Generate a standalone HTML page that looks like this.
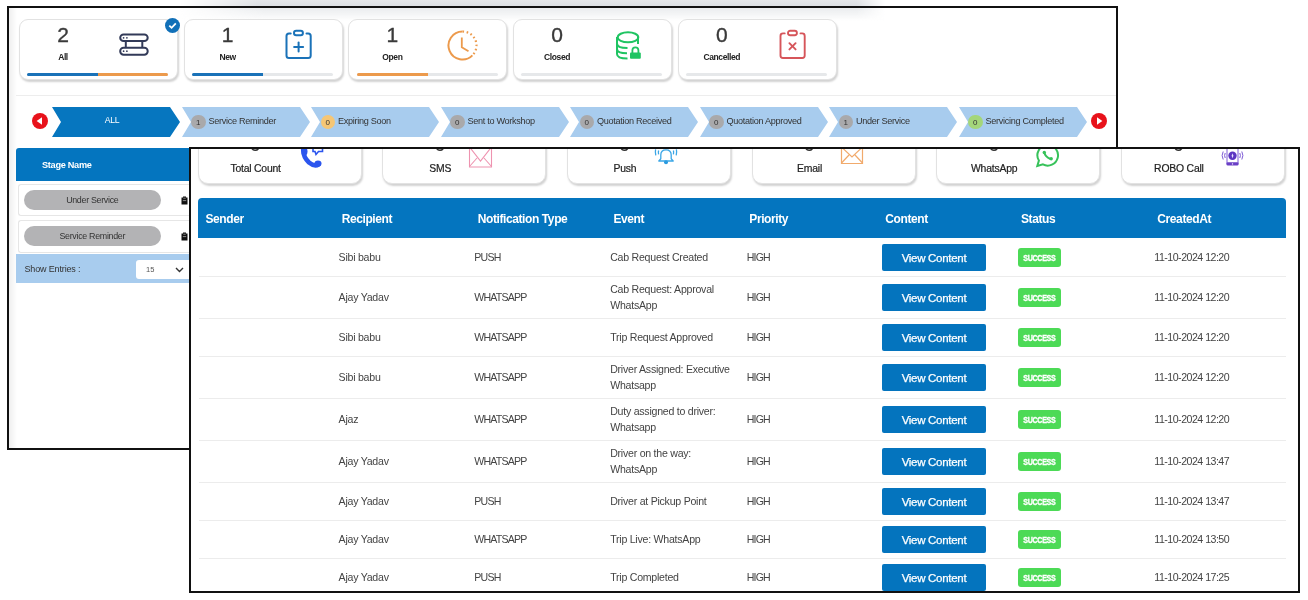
<!DOCTYPE html><html><head><meta charset="utf-8"><style>*{box-sizing:border-box;margin:0;padding:0}
html,body{width:1308px;height:600px;overflow:hidden;background:#fff;font-family:"Liberation Sans",sans-serif;color:#333;position:relative}
.abs{position:absolute}
#blob{position:absolute;left:180px;top:0;width:705px;height:6px;background:linear-gradient(180deg,#e4e6e9,#dcdfe3);-webkit-mask-image:linear-gradient(90deg,transparent 0,#000 11%,#000 96%,transparent 100%)}
#lw{will-change:transform;position:absolute;left:7px;top:6px;width:1111px;height:444px;border:2px solid #111;background:#fff;overflow:hidden}
#lwshade{position:absolute;left:171px;top:0;width:705px;height:13px;background:linear-gradient(180deg,#eaecee,rgba(255,255,255,0));-webkit-mask-image:linear-gradient(90deg,transparent 0,#000 12%,#000 96%,transparent 100%)}
#lwleft{position:absolute;left:0;top:0;width:8px;height:100%;background:linear-gradient(90deg,#efefef,rgba(255,255,255,0))}
.card{position:absolute;top:11px;width:159px;height:61px;border:1px solid #e2e2e2;border-radius:9px;background:#fff;box-shadow:1px 2px 2px rgba(0,0,0,.18)}
.card .num{position:absolute;left:0;width:86px;text-align:center;top:3.2px;font-size:21px;color:#3a3a3a;line-height:24px;-webkit-text-stroke:.35px #3a3a3a}
.card .lbl{position:absolute;left:0;width:86px;text-align:center;top:31.5px;font-size:8.5px;letter-spacing:-.4px;font-weight:bold;color:#222;line-height:10px}
.card .bar{position:absolute;left:7.3px;top:52.6px;width:141px;height:3px;border-radius:2px;background:#e6e8ea;overflow:hidden}
.card .bar i{position:absolute;top:0;height:3px;display:block}
.card svg{position:absolute}
#divl{position:absolute;left:7px;top:87px;width:1100px;height:1px;background:#ededed}
.chev{position:absolute;top:99px;height:30px;width:128px}
.chev svg{position:absolute;left:0;top:0}
.chev .t{position:absolute;top:-0.6px;line-height:30px;font-size:9.1px;letter-spacing:-.3px;color:#333;white-space:nowrap}
.chev .b{position:absolute;top:7.6px;width:14.5px;height:14.5px;border-radius:50%;font-size:8px;line-height:15.5px;text-align:center;color:#333}
#rw{will-change:transform;position:absolute;left:189px;top:147px;width:1111px;height:446px;border:2px solid #111;background:#fff;overflow:hidden}
.rcard{position:absolute;top:-30px;width:164px;height:65px;border:1px solid #e2e2e2;border-radius:10px;background:#fff;box-shadow:1px 2px 2px rgba(0,0,0,.18)}
.rcard .lbl{position:absolute;left:0;width:114px;text-align:center;top:43px;font-size:10.4px;letter-spacing:-.2px;color:#222;line-height:12px;-webkit-text-stroke:.2px #222}
.rcard .rnum{position:absolute;left:0;width:114px;text-align:center;top:11.5px;font-size:20px;color:#333;line-height:24px}
.rcard svg{position:absolute}
#thead{position:absolute;left:6.8px;top:48.8px;width:1088px;height:40px;background:#0475bf;border-radius:4px 4px 0 0}
.th{position:absolute;top:1px;line-height:40px;font-size:12px;letter-spacing:-.4px;font-weight:bold;color:#fff;white-space:nowrap}
.row{position:absolute;left:8px;width:1087px;border-bottom:1px solid #ececec}
.td{position:absolute;font-size:10.6px;letter-spacing:-.25px;color:#444;white-space:nowrap;line-height:16px}
.btn{position:absolute;width:104px;height:27px;background:#0474be;border-radius:2px;color:#fff;-webkit-text-stroke:.25px #fff;font-size:11.5px;letter-spacing:-.3px;line-height:28px;text-align:center}
.ok{position:absolute;width:43px;height:19px;background:#4cda56;border-radius:3px;color:#fff;font-size:9px;font-weight:bold;line-height:19px;text-align:center;letter-spacing:-.4px}
.ok span{display:inline-block;transform:scaleX(.79);-webkit-text-stroke:.35px #fff;position:relative;top:1px}
</style></head><body>
<div id="blob"></div>
<div id="lw"><div id="lwshade"></div><div id="lwleft"></div>
<div class="card" style="left:10.0px"><div class="num">2</div><div class="lbl">All</div><svg style="left:99px;top:13px" width="31" height="24" viewBox="0 0 31 24" fill="none" stroke="#323a58" stroke-width="2">
<rect x="1.2" y="1.5" width="27.5" height="6.6" rx="3.4"/><rect x="1.2" y="14.7" width="27.5" height="7" rx="3.4"/>
<line x1="6.8" y1="8" x2="6.8" y2="14.8"/><line x1="23.3" y1="8" x2="23.3" y2="14.8"/>
<circle cx="4.6" cy="4.8" r=".85" fill="#323a58" stroke="none"/><circle cx="7.9" cy="4.8" r=".85" fill="#323a58" stroke="none"/>
<circle cx="4.6" cy="18.2" r=".85" fill="#323a58" stroke="none"/><circle cx="7.9" cy="18.2" r=".85" fill="#323a58" stroke="none"/></svg><div class="bar"><i style="left:0px;width:71px;background:#1a72b8"></i><i style="left:71px;width:71px;background:#ec9a4c"></i></div></div>
<div class="card" style="left:174.7px"><div class="num">1</div><div class="lbl">New</div><svg style="left:100px;top:9px" width="28" height="31" viewBox="0 0 28 31" fill="none" stroke="#1a72b8" stroke-width="2" stroke-linecap="round">
<path d="M5.7 4.4H4Q1.5 4.4 1.5 6.9V26.5Q1.5 29 4 29H23.2Q25.7 29 25.7 26.5V6.9Q25.7 4.4 23.2 4.4H21.5"/>
<rect x="9" y="1.7" width="8.9" height="4.6" rx="2.2"/>
<line x1="13.6" y1="13.6" x2="13.6" y2="22.6"/><line x1="9.1" y1="18.1" x2="18.1" y2="18.1"/></svg><div class="bar"><i style="left:0px;width:71px;background:#1a72b8"></i></div></div>
<div class="card" style="left:339.4px"><div class="num">1</div><div class="lbl">Open</div><svg style="left:98px;top:10px" width="31" height="31" viewBox="0 0 31 31" fill="none" stroke="#ec9a4c" stroke-width="2">
<path d="M15.5 1.5A14 14 0 1 0 25.4 25.4"/>
<path d="M15.5 1.5A14 14 0 0 1 25.4 25.4" stroke-dasharray="1.6 2.6" stroke-width="2.2"/>
<path d="M14.8 7.5V17.3L21.5 21.3" stroke-width="1.8"/></svg><div class="bar"><i style="left:0px;width:71px;background:#ec9a4c"></i></div></div>
<div class="card" style="left:504.1px"><div class="num">0</div><div class="lbl">Closed</div><svg style="left:102px;top:11px" width="26" height="29" viewBox="0 0 26 29" fill="none" stroke="#1fc462" stroke-width="2">
<ellipse cx="12" cy="6.3" rx="10.3" ry="5"/>
<path d="M1 6V23Q1 27.5 11.5 27.5"/><path d="M22 6V13"/>
<path d="M1 12.5Q1 17 11.5 17"/><path d="M1 18Q1 22.3 11 22.3"/>
<rect x="14" y="21.6" width="10.8" height="6.2" rx="1" fill="#1fc462" stroke="none"/>
<path d="M16.4 22V19.3Q16.4 16.4 19.4 16.4Q22.4 16.4 22.4 19.3V22" stroke-width="1.8"/></svg><div class="bar"></div></div>
<div class="card" style="left:668.8px"><div class="num">0</div><div class="lbl">Cancelled</div><svg style="left:100px;top:9px" width="28" height="31" viewBox="0 0 28 31" fill="none" stroke="#d6555a" stroke-width="1.9" stroke-linecap="round">
<path d="M5.7 4.4H4Q1.5 4.4 1.5 6.9V26.5Q1.5 29 4 29H23.2Q25.7 29 25.7 26.5V6.9Q25.7 4.4 23.2 4.4H21.5"/>
<rect x="9" y="1.7" width="8.9" height="4.6" rx="2.2"/>
<line x1="10.4" y1="14.2" x2="16.6" y2="20.4"/><line x1="16.6" y1="14.2" x2="10.4" y2="20.4"/></svg><div class="bar"></div></div>
<svg class="abs" style="left:155.5px;top:10px" width="15" height="15" viewBox="0 0 15 15"><circle cx="7.5" cy="7.5" r="7.5" fill="#1170b8"/><path d="M4.3 7.6L6.6 9.8L10.8 5.4" fill="none" stroke="#fff" stroke-width="1.8"/></svg>
<div id="divl"></div>
<div class="chev" style="left:43.0px"><svg width="128" height="30"><polygon points="0,0 118,0 128,15 118,30 0,30 9,15" fill="#0676bf"/></svg><div class="t" style="left:0;top:-1.6px;width:120px;text-align:center;color:#fff;font-size:8.7px">ALL</div></div>
<div class="chev" style="left:172.5px"><svg width="128" height="30"><polygon points="0,0 118,0 128,15 118,30 0,30 9,15" fill="#a8ccee"/></svg><div class="b" style="left:9.5px;background:#a9a9ab">1</div><div class="t" style="left:27px">Service Reminder</div></div>
<div class="chev" style="left:302.0px"><svg width="128" height="30"><polygon points="0,0 118,0 128,15 118,30 0,30 9,15" fill="#a8ccee"/></svg><div class="b" style="left:9.5px;background:#f5c675">0</div><div class="t" style="left:27px">Expiring Soon</div></div>
<div class="chev" style="left:431.5px"><svg width="128" height="30"><polygon points="0,0 118,0 128,15 118,30 0,30 9,15" fill="#a8ccee"/></svg><div class="b" style="left:9.5px;background:#a9a9ab">0</div><div class="t" style="left:27px">Sent to Workshop</div></div>
<div class="chev" style="left:561.0px"><svg width="128" height="30"><polygon points="0,0 118,0 128,15 118,30 0,30 9,15" fill="#a8ccee"/></svg><div class="b" style="left:9.5px;background:#a9a9ab">0</div><div class="t" style="left:27px">Quotation Received</div></div>
<div class="chev" style="left:690.5px"><svg width="128" height="30"><polygon points="0,0 118,0 128,15 118,30 0,30 9,15" fill="#a8ccee"/></svg><div class="b" style="left:9.5px;background:#a9a9ab">0</div><div class="t" style="left:27px">Quotation Approved</div></div>
<div class="chev" style="left:820.0px"><svg width="128" height="30"><polygon points="0,0 118,0 128,15 118,30 0,30 9,15" fill="#a8ccee"/></svg><div class="b" style="left:9.5px;background:#a9a9ab">1</div><div class="t" style="left:27px">Under Service</div></div>
<div class="chev" style="left:949.5px"><svg width="128" height="30"><polygon points="0,0 118,0 128,15 118,30 0,30 9,15" fill="#a8ccee"/></svg><div class="b" style="left:9.5px;background:#a4d67a">0</div><div class="t" style="left:27px">Servicing Completed</div></div>
<svg class="abs" style="left:22.5px;top:105px" width="16" height="16" viewBox="0 0 16 16"><circle cx="8" cy="8" r="8" fill="#e8121b"/><path d="M10 4.2V11.8L4.6 8Z" fill="#fff"/></svg>
<svg class="abs" style="left:1081.5px;top:105px" width="16" height="16" viewBox="0 0 16 16"><circle cx="8" cy="8" r="8" fill="#e8121b"/><path d="M6 4.2V11.8L11.4 8Z" fill="#fff"/></svg>
<div class="abs" style="left:7px;top:140px;width:200px;height:32.5px;background:#0475bf;border-radius:3px 0 0 0"></div>
<div class="abs" style="left:33px;top:140.5px;line-height:32.5px;font-size:9.2px;letter-spacing:-.3px;font-weight:bold;color:#fff">Stage Name</div>
<div class="abs" style="left:8.5px;top:175.8px;width:200px;height:32.5px;border:1px solid #e6e6e6;border-right:none;border-radius:3px 0 0 3px"></div>
<div class="abs pill" style="left:14.8px;top:181.5px;width:137px;height:20.5px;border-radius:10px;background:#b3b3b5;font-size:8.9px;letter-spacing:-.3px;line-height:20.5px;text-align:center;color:#333">Under Service</div>
<svg class="abs" style="left:172px;top:187.8px" width="7" height="9" viewBox="0 0 7 9"><path d="M0.5 1.5H2V0.6H5V1.5H6.5V8.5H0.5Z" fill="#111"/><path d="M2.3 2.2H4.7M1.8 4.6H5.2" stroke="#ddd" stroke-width=".6"/></svg>
<div class="abs" style="left:8.5px;top:212px;width:200px;height:32.5px;border:1px solid #e6e6e6;border-right:none;border-radius:3px 0 0 3px"></div>
<div class="abs pill" style="left:14.8px;top:217.7px;width:137px;height:20.5px;border-radius:10px;background:#b3b3b5;font-size:8.9px;letter-spacing:-.3px;line-height:20.5px;text-align:center;color:#333">Service Reminder</div>
<svg class="abs" style="left:172px;top:224.0px" width="7" height="9" viewBox="0 0 7 9"><path d="M0.5 1.5H2V0.6H5V1.5H6.5V8.5H0.5Z" fill="#111"/><path d="M2.3 2.2H4.7M1.8 4.6H5.2" stroke="#ddd" stroke-width=".6"/></svg>
<div class="abs" style="left:7px;top:246px;width:200px;height:28.5px;background:#a8ccee"></div>
<div class="abs" style="left:15.5px;top:246.7px;line-height:28.5px;font-size:9px;letter-spacing:-.15px;color:#333">Show Entries :</div>
<div class="abs" style="left:126.5px;top:252px;width:60px;height:19px;background:#fff;border-radius:3px"></div>
<div class="abs" style="left:137px;top:252px;line-height:19px;font-size:7.5px;color:#555">15</div>
<svg class="abs" style="left:166px;top:259px" width="9" height="6" viewBox="0 0 9 6"><path d="M1 1L4.5 4.5L8 1" fill="none" stroke="#333" stroke-width="1.4"/></svg>
</div>
<div id="rw">
<div class="rcard" style="left:6.6px"><div class="rnum">9</div><div class="lbl">Total Count</div></div>
<div class="rcard" style="left:191.2px"><div class="rnum">9</div><div class="lbl">SMS</div></div>
<div class="rcard" style="left:375.9px"><div class="rnum">9</div><div class="lbl">Push</div></div>
<div class="rcard" style="left:560.6px"><div class="rnum">9</div><div class="lbl">Email</div></div>
<div class="rcard" style="left:745.2px"><div class="rnum">9</div><div class="lbl">WhatsApp</div></div>
<div class="rcard" style="left:929.9px"><div class="rnum">9</div><div class="lbl">ROBO Call</div></div>
<svg class="abs" style="left:-191px;top:-149px" width="1308" height="600" viewBox="0 0 1308 600">
<path d="M303.5 146.5Q302 156 309 162.5Q314.5 167 318.5 164.5" fill="none" stroke="#2b55ee" stroke-width="4.6" stroke-linecap="round"/>
<path d="M313 147V151.5H315L316 154.5L318.5 151.5H322.5V147" fill="none" stroke="#2b55ee" stroke-width="1.6"/><ellipse cx="304.5" cy="151.5" rx="3" ry="4" fill="#2b55ee"/><ellipse cx="318" cy="163.5" rx="3.5" ry="3" fill="#2b55ee"/>
<g fill="none" stroke="#ee93b0" stroke-width="1.1"><path d="M469.5 146V167H491.5V146"/><path d="M469.5 147L480.5 161L491.5 147M469.5 166.5L477 158M491.5 166.5L484 158"/></g>
<g fill="none" stroke="#3aa6e6" stroke-width="1.3" stroke-linejoin="round"><path d="M658.8 161L660.8 158.8V155Q660.8 149.8 666 149.8Q671.2 149.8 671.2 155V158.8L673.2 161Z"/><path d="M655.6 149.3Q655 152.3 655.8 155.3M658.6 150.5Q658.1 152.3 658.6 154.3M676.4 149.3Q677 152.3 676.2 155.3M673.4 150.5Q673.9 152.3 673.4 154.3"/></g>
<circle cx="666" cy="162.3" r="2" fill="#2a9be0"/>
<g fill="none" stroke="#f1aa6c" stroke-width="1.2"><path d="M841.5 146V163.5H862.5V146"/><path d="M841.5 147L852 157L862.5 147M841.5 163L849 155M862.5 163L855 155"/></g>
<path d="M1047.7 145A10.3 10.3 0 0 0 1038.9 160.6L1037.3 166L1042.9 164.4A10.3 10.3 0 1 0 1047.7 145Z" fill="none" stroke="#37c25a" stroke-width="2"/>
<path d="M1044.3 152.3Q1045 156.5 1050.5 159" fill="none" stroke="#37c25a" stroke-width="2" stroke-linecap="round"/><circle cx="1044.3" cy="152.5" r="1.7" fill="#37c25a"/><circle cx="1051.2" cy="158.8" r="1.7" fill="#37c25a"/>
<g stroke="#7d5ad6" fill="none" stroke-width="1"><path d="M1227 146V164M1238 146V164"/>
<path d="M1223.2 151.5Q1221 155.5 1223.2 159.5M1225.2 153Q1224 155.5 1225.2 158M1241.8 151.5Q1244 155.5 1241.8 159.5M1239.8 153Q1241 155.5 1239.8 158"/></g>
<rect x="1226.5" y="162.3" width="12" height="3.3" rx="1.3" fill="#6a3fc6"/><circle cx="1232.5" cy="163.9" r=".7" fill="#fff"/>
<circle cx="1232.5" cy="155.7" r="4.2" fill="#5c36c2"/><path d="M1232.5 153.2L1233.4 155.7L1232.5 158.2L1231.6 155.7Z" fill="#e8e0ff"/>
</svg>
<div id="thead">
<div class="th" style="left:7.6px">Sender</div>
<div class="th" style="left:143.9px">Recipient</div>
<div class="th" style="left:279.9px">Notification Type</div>
<div class="th" style="left:415.6px">Event</div>
<div class="th" style="left:551.5px">Priority</div>
<div class="th" style="left:687.5px">Content</div>
<div class="th" style="left:823.2px">Status</div>
<div class="th" style="left:959.5px">CreatedAt</div>
</div>
<div class="row" style="top:89.5px;height:38.2px"></div>
<div class="td" style="left:147.6px;top:99.8px;letter-spacing:-0.25px">Sibi babu</div>
<div class="td" style="left:283.3px;top:99.8px;letter-spacing:-0.8px">PUSH</div>
<div class="td" style="left:963.3px;top:99.8px;letter-spacing:-0.5px">11-10-2024 12:20</div>
<div class="td" style="left:419.2px;top:99.8px">Cab Request Created</div>
<div class="td" style="left:555.7px;top:99.6px;letter-spacing:-0.8px">HIGH</div>
<div class="btn" style="left:691px;top:94.8px">View Content</div>
<div class="ok" style="left:827.2px;top:98.7px"><span>SUCCESS</span></div>
<div class="row" style="top:127.7px;height:42.4px"></div>
<div class="td" style="left:147.6px;top:140.1px;letter-spacing:-0.25px">Ajay Yadav</div>
<div class="td" style="left:283.3px;top:140.1px;letter-spacing:-0.8px">WHATSAPP</div>
<div class="td" style="left:963.3px;top:140.1px;letter-spacing:-0.5px">11-10-2024 12:20</div>
<div class="td" style="left:419.2px;top:132.1px">Cab Request: Approval<br>WhatsApp</div>
<div class="td" style="left:555.7px;top:139.9px;letter-spacing:-0.8px">HIGH</div>
<div class="btn" style="left:691px;top:135.1px">View Content</div>
<div class="ok" style="left:827.2px;top:139.0px"><span>SUCCESS</span></div>
<div class="row" style="top:170.1px;height:37.9px"></div>
<div class="td" style="left:147.6px;top:180.2px;letter-spacing:-0.25px">Sibi babu</div>
<div class="td" style="left:283.3px;top:180.2px;letter-spacing:-0.8px">WHATSAPP</div>
<div class="td" style="left:963.3px;top:180.2px;letter-spacing:-0.5px">11-10-2024 12:20</div>
<div class="td" style="left:419.2px;top:180.2px">Trip Request Approved</div>
<div class="td" style="left:555.7px;top:180.1px;letter-spacing:-0.8px">HIGH</div>
<div class="btn" style="left:691px;top:175.2px">View Content</div>
<div class="ok" style="left:827.2px;top:179.2px"><span>SUCCESS</span></div>
<div class="row" style="top:208.0px;height:41.8px"></div>
<div class="td" style="left:147.6px;top:220.1px;letter-spacing:-0.25px">Sibi babu</div>
<div class="td" style="left:283.3px;top:220.1px;letter-spacing:-0.8px">WHATSAPP</div>
<div class="td" style="left:963.3px;top:220.1px;letter-spacing:-0.5px">11-10-2024 12:20</div>
<div class="td" style="left:419.2px;top:212.1px">Driver Assigned: Executive<br>Whatsapp</div>
<div class="td" style="left:555.7px;top:219.9px;letter-spacing:-0.8px">HIGH</div>
<div class="btn" style="left:691px;top:215.1px">View Content</div>
<div class="ok" style="left:827.2px;top:219.0px"><span>SUCCESS</span></div>
<div class="row" style="top:249.8px;height:42.1px"></div>
<div class="td" style="left:147.6px;top:262.1px;letter-spacing:-0.25px">Ajaz</div>
<div class="td" style="left:283.3px;top:262.1px;letter-spacing:-0.8px">WHATSAPP</div>
<div class="td" style="left:963.3px;top:262.1px;letter-spacing:-0.5px">11-10-2024 12:20</div>
<div class="td" style="left:419.2px;top:254.1px">Duty assigned to driver:<br>Whatsapp</div>
<div class="td" style="left:555.7px;top:261.9px;letter-spacing:-0.8px">HIGH</div>
<div class="btn" style="left:691px;top:257.1px">View Content</div>
<div class="ok" style="left:827.2px;top:261.0px"><span>SUCCESS</span></div>
<div class="row" style="top:291.9px;height:42.1px"></div>
<div class="td" style="left:147.6px;top:304.1px;letter-spacing:-0.25px">Ajay Yadav</div>
<div class="td" style="left:283.3px;top:304.1px;letter-spacing:-0.8px">WHATSAPP</div>
<div class="td" style="left:963.3px;top:304.1px;letter-spacing:-0.5px">11-10-2024 13:47</div>
<div class="td" style="left:419.2px;top:296.1px">Driver on the way:<br>WhatsApp</div>
<div class="td" style="left:555.7px;top:303.9px;letter-spacing:-0.8px">HIGH</div>
<div class="btn" style="left:691px;top:299.1px">View Content</div>
<div class="ok" style="left:827.2px;top:303.1px"><span>SUCCESS</span></div>
<div class="row" style="top:334.0px;height:38.1px"></div>
<div class="td" style="left:147.6px;top:344.2px;letter-spacing:-0.25px">Ajay Yadav</div>
<div class="td" style="left:283.3px;top:344.2px;letter-spacing:-0.8px">PUSH</div>
<div class="td" style="left:963.3px;top:344.2px;letter-spacing:-0.5px">11-10-2024 13:47</div>
<div class="td" style="left:419.2px;top:344.2px">Driver at Pickup Point</div>
<div class="td" style="left:555.7px;top:344.1px;letter-spacing:-0.8px">HIGH</div>
<div class="btn" style="left:691px;top:339.2px">View Content</div>
<div class="ok" style="left:827.2px;top:343.2px"><span>SUCCESS</span></div>
<div class="row" style="top:372.1px;height:38.1px"></div>
<div class="td" style="left:147.6px;top:382.4px;letter-spacing:-0.25px">Ajay Yadav</div>
<div class="td" style="left:283.3px;top:382.4px;letter-spacing:-0.8px">WHATSAPP</div>
<div class="td" style="left:963.3px;top:382.4px;letter-spacing:-0.5px">11-10-2024 13:50</div>
<div class="td" style="left:419.2px;top:382.4px">Trip Live: WhatsApp</div>
<div class="td" style="left:555.7px;top:382.2px;letter-spacing:-0.8px">HIGH</div>
<div class="btn" style="left:691px;top:377.4px">View Content</div>
<div class="ok" style="left:827.2px;top:381.3px"><span>SUCCESS</span></div>
<div class="row" style="top:410.2px;height:38.3px"></div>
<div class="td" style="left:147.6px;top:419.7px;letter-spacing:-0.25px">Ajay Yadav</div>
<div class="td" style="left:283.3px;top:419.7px;letter-spacing:-0.8px">PUSH</div>
<div class="td" style="left:963.3px;top:419.7px;letter-spacing:-0.5px">11-10-2024 17:25</div>
<div class="td" style="left:419.2px;top:419.7px">Trip Completed</div>
<div class="td" style="left:555.7px;top:419.5px;letter-spacing:-0.8px">HIGH</div>
<div class="btn" style="left:691px;top:414.7px">View Content</div>
<div class="ok" style="left:827.2px;top:418.6px"><span>SUCCESS</span></div>
</div>
</body></html>
